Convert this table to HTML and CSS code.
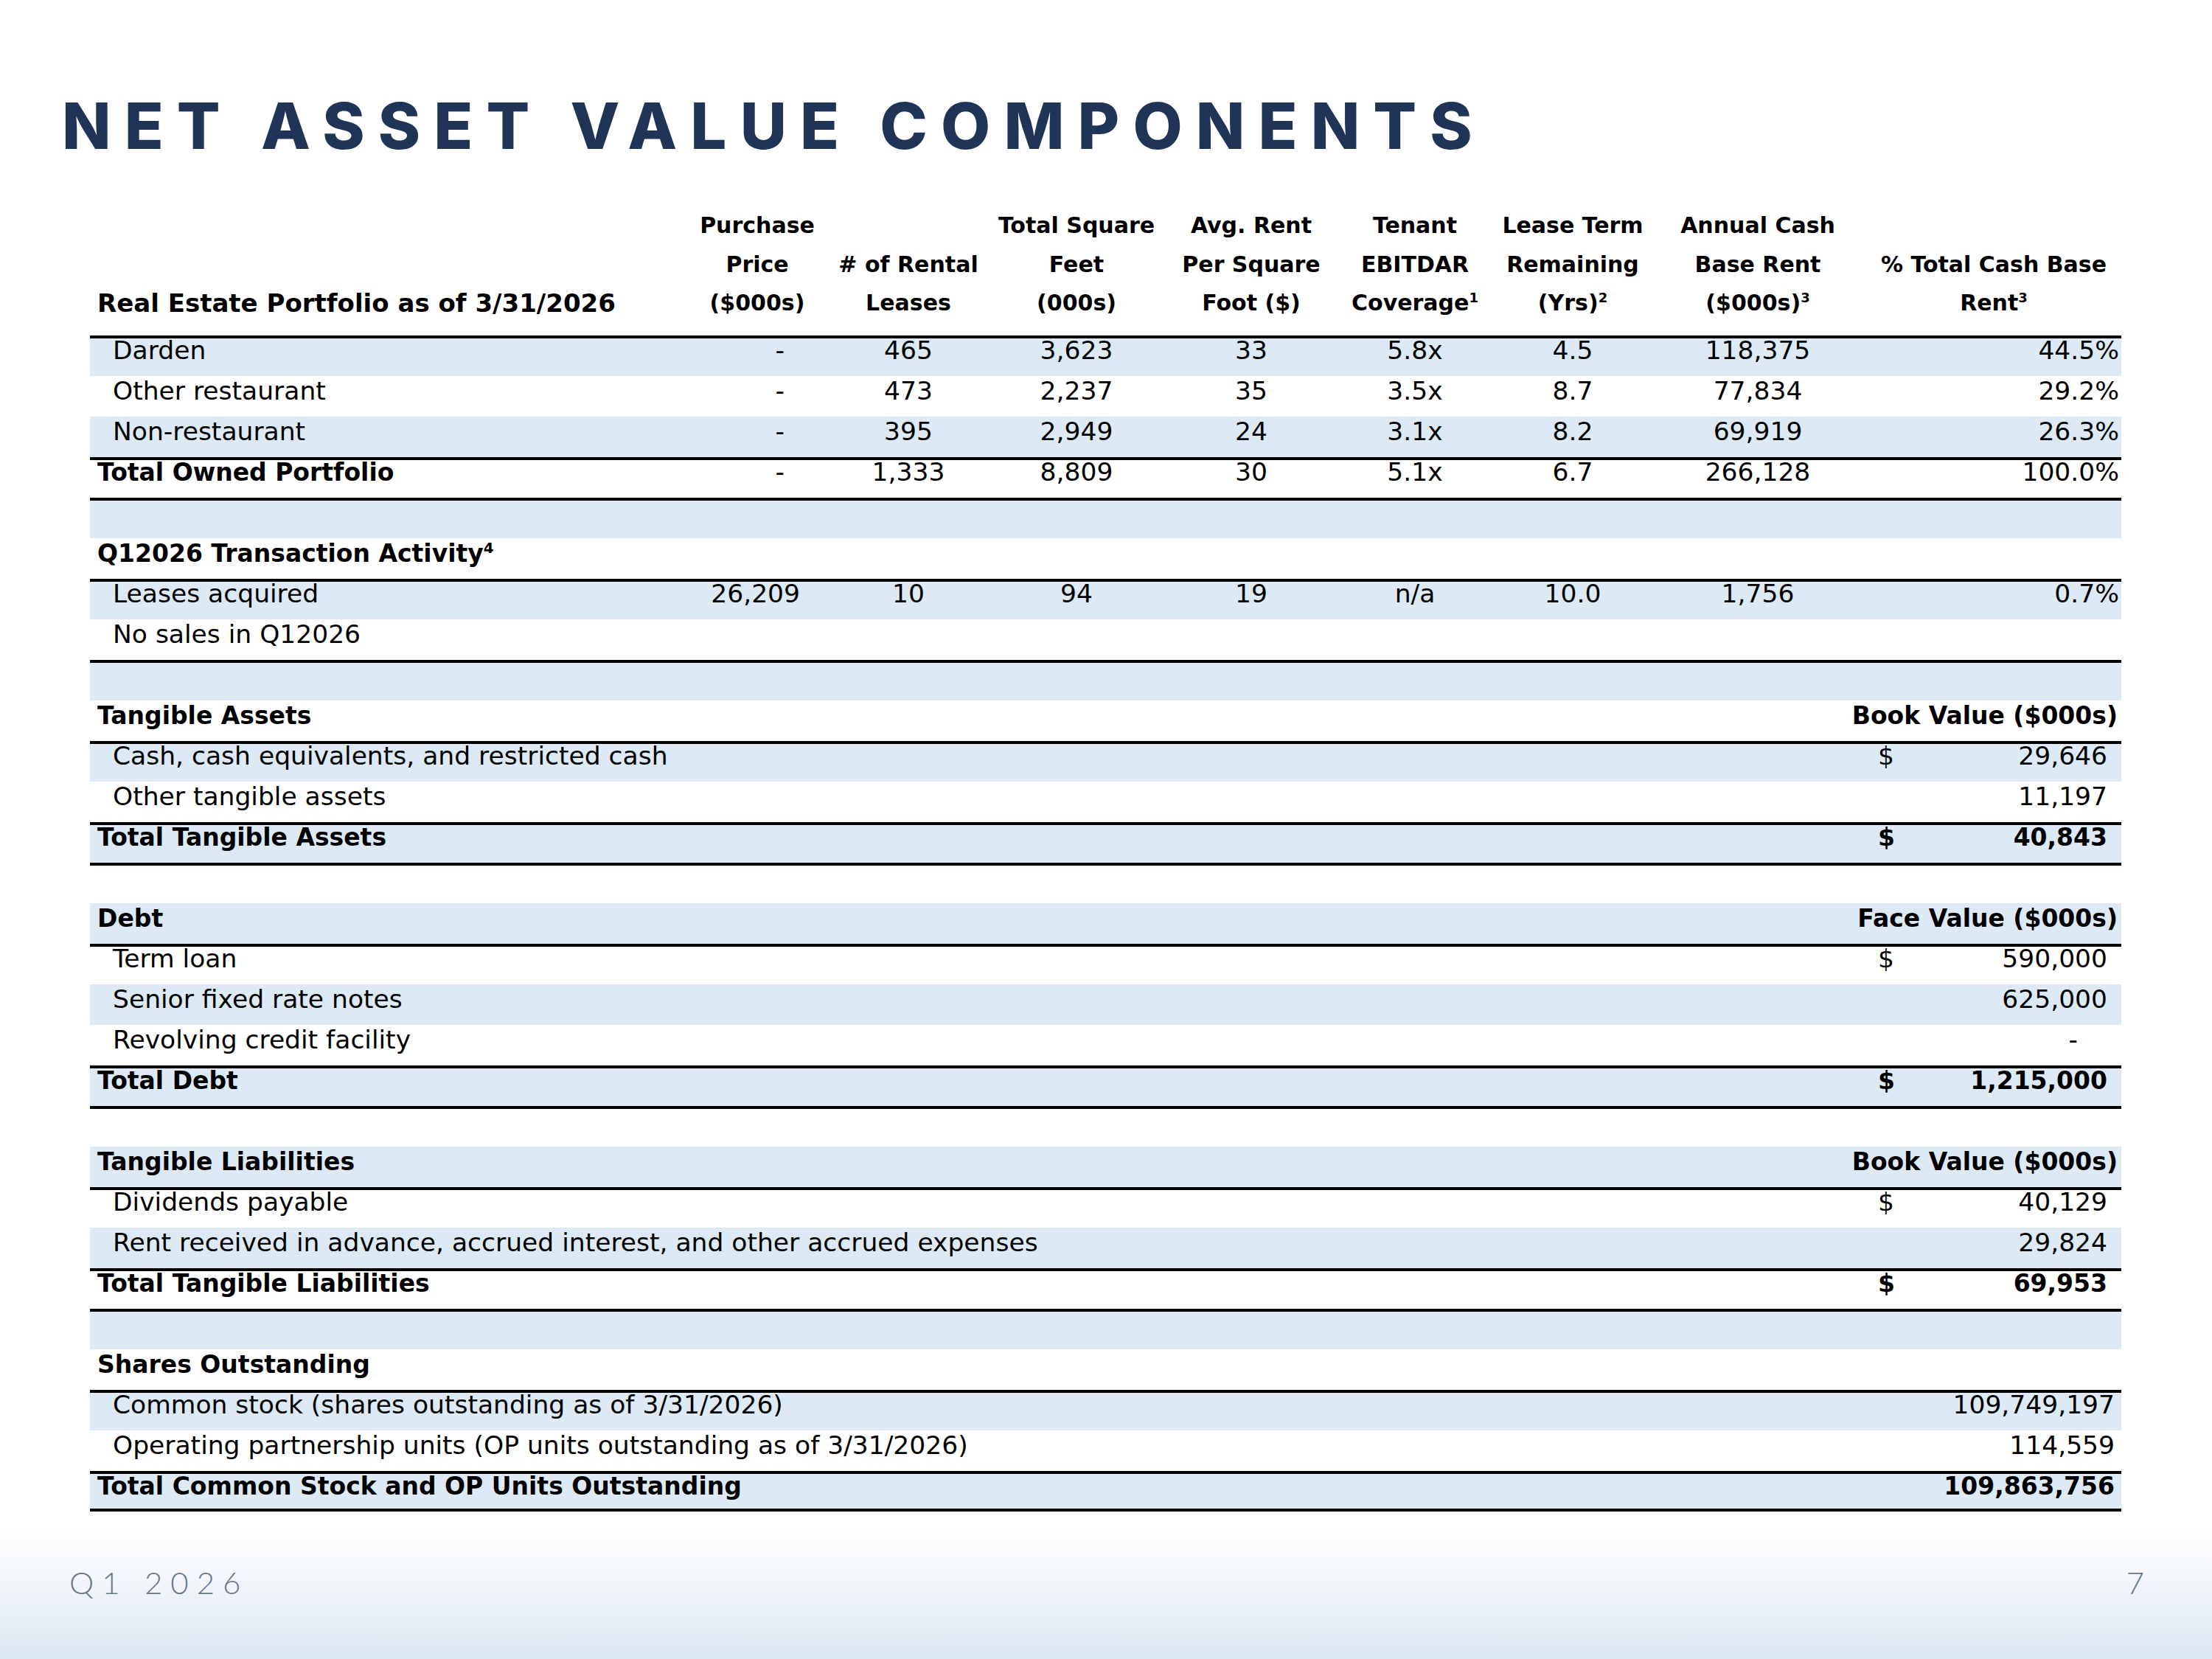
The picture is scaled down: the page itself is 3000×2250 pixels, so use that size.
FILE: index.html
```html
<!DOCTYPE html>
<html>
<head>
    <title>Net Asset Value Components</title>
    <link rel="stylesheet" href="styles.css">
</head>
<body>
<div class="page">
    <h1 class="title">NET ASSET VALUE COMPONENTS</h1>

    <div class="sheet">
        <div class="head">
            <div class="hc label">Real Estate Portfolio as of 3/31/2026</div>
            <div class="hc">Purchase<br>Price<br>($000s)</div>
            <div class="hc"># of Rental<br>Leases</div>
            <div class="hc">Total Square<br>Feet<br>(000s)</div>
            <div class="hc">Avg. Rent<br>Per Square<br>Foot ($)</div>
            <div class="hc">Tenant<br>EBITDAR<br>Coverage<sup>1</sup></div>
            <div class="hc">Lease Term<br>Remaining<br>(Yrs)<sup>2</sup></div>
            <div class="hc">Annual Cash<br>Base Rent<br>($000s)<sup>3</sup></div>
            <div class="hc">% Total Cash Base<br>Rent<sup>3</sup></div>
        </div>

        <!-- portfolio -->
        <div class="row rule">
            <div class="c sub">Darden</div>
            <div class="c price dash">-</div>
            <div class="c">465</div>
            <div class="c">3,623</div>
            <div class="c">33</div>
            <div class="c">5.8x</div>
            <div class="c">4.5</div>
            <div class="c">118,375</div>
            <div class="c pct">44.5%</div>
        </div>
        <div class="row">
            <div class="c sub">Other restaurant</div>
            <div class="c price dash">-</div>
            <div class="c">473</div>
            <div class="c">2,237</div>
            <div class="c">35</div>
            <div class="c">3.5x</div>
            <div class="c">8.7</div>
            <div class="c">77,834</div>
            <div class="c pct">29.2%</div>
        </div>
        <div class="row">
            <div class="c sub">Non-restaurant</div>
            <div class="c price dash">-</div>
            <div class="c">395</div>
            <div class="c">2,949</div>
            <div class="c">24</div>
            <div class="c">3.1x</div>
            <div class="c">8.2</div>
            <div class="c">69,919</div>
            <div class="c pct">26.3%</div>
        </div>
        <div class="row rule">
            <div class="c strong label">Total Owned Portfolio</div>
            <div class="c price dash">-</div>
            <div class="c">1,333</div>
            <div class="c">8,809</div>
            <div class="c">30</div>
            <div class="c">5.1x</div>
            <div class="c">6.7</div>
            <div class="c">266,128</div>
            <div class="c pct">100.0%</div>
        </div>

        <!-- transactions -->
        <div class="row rule"></div>
        <div class="row">
            <div class="c strong label wide">Q12026 Transaction Activity<sup>4</sup></div>
        </div>
        <div class="row rule">
            <div class="c sub">Leases acquired</div>
            <div class="c price">26,209</div>
            <div class="c">10</div>
            <div class="c">94</div>
            <div class="c">19</div>
            <div class="c">n/a</div>
            <div class="c">10.0</div>
            <div class="c">1,756</div>
            <div class="c pct">0.7%</div>
        </div>
        <div class="row">
            <div class="c sub wide">No sales in Q12026</div>
        </div>

        <!-- tangible assets -->
        <div class="row rule"></div>
        <div class="row">
            <div class="c strong label wide">Tangible Assets</div>
            <div class="c strong unit">Book Value ($000s)</div>
        </div>
        <div class="row rule">
            <div class="c sub wide">Cash, cash equivalents, and restricted cash</div>
            <div class="c money"><span>$</span><span>29,646</span></div>
        </div>
        <div class="row">
            <div class="c sub wide">Other tangible assets</div>
            <div class="c money"><span></span><span>11,197</span></div>
        </div>
        <div class="row rule">
            <div class="c strong label wide">Total Tangible Assets</div>
            <div class="c money strong"><span>$</span><span>40,843</span></div>
        </div>

        <!-- debt -->
        <div class="row rule"></div>
        <div class="row">
            <div class="c strong label wide">Debt</div>
            <div class="c strong unit">Face Value ($000s)</div>
        </div>
        <div class="row rule">
            <div class="c sub wide">Term loan</div>
            <div class="c money"><span>$</span><span>590,000</span></div>
        </div>
        <div class="row">
            <div class="c sub wide">Senior fixed rate notes</div>
            <div class="c money"><span></span><span>625,000</span></div>
        </div>
        <div class="row">
            <div class="c sub wide">Revolving credit facility</div>
            <div class="c money"><span></span><span class="nil">-</span></div>
        </div>
        <div class="row rule">
            <div class="c strong label wide">Total Debt</div>
            <div class="c money strong"><span>$</span><span>1,215,000</span></div>
        </div>

        <!-- tangible liabilities -->
        <div class="row rule"></div>
        <div class="row">
            <div class="c strong label wide">Tangible Liabilities</div>
            <div class="c strong unit">Book Value ($000s)</div>
        </div>
        <div class="row rule">
            <div class="c sub wide">Dividends payable</div>
            <div class="c money"><span>$</span><span>40,129</span></div>
        </div>
        <div class="row">
            <div class="c sub wide">Rent received in advance, accrued interest, and other accrued expenses</div>
            <div class="c money"><span></span><span>29,824</span></div>
        </div>
        <div class="row rule">
            <div class="c strong label wide">Total Tangible Liabilities</div>
            <div class="c money strong"><span>$</span><span>69,953</span></div>
        </div>

        <!-- shares -->
        <div class="row rule"></div>
        <div class="row">
            <div class="c strong label wide">Shares Outstanding</div>
        </div>
        <div class="row rule">
            <div class="c sub wide">Common stock (shares outstanding as of 3/31/2026)</div>
            <div class="c shares">109,749,197</div>
        </div>
        <div class="row">
            <div class="c sub wide">Operating partnership units (OP units outstanding as of 3/31/2026)</div>
            <div class="c shares">114,559</div>
        </div>
        <div class="row rule last">
            <div class="c strong label wide">Total Common Stock and OP Units Outstanding</div>
            <div class="c shares strong">109,863,756</div>
        </div>
    </div>

    <footer class="foot">
        <span class="quarter">Q1 2026</span>
        <span class="page-no">7</span>
    </footer>
</div>
</body>
</html>
```

FILE: styles.css
```css
body {
    margin: 0;
    background: #fff;
    color: #000;
    font-family: "DejaVu Sans", sans-serif;
}
.page {
    width: 3000px;
    height: 2250px;
    display: flex;
    flex-direction: column;
    overflow: hidden;
}
.title {
    margin: 127px 0 0 84px;
    font-family: Inter, sans-serif;
    font-weight: 800;
    font-size: 87px;
    line-height: 87px;
    letter-spacing: 18.1px;
    color: #1f3457;
}
.sheet {
    margin: 66px 0 0 122px;
    width: 2755px;
}
.head,
.row {
    display: grid;
    grid-template-columns: 803px 204px 206px 250px 224px 220px 208px 294px 346px;
}
.head {
    align-items: end;
    padding-bottom: 17px;
    font-weight: bold;
    font-size: 30px;
    line-height: 52.5px;
    text-align: center;
}
.hc.label {
    font-size: 34px;
    text-align: left;
    padding-left: 10px;
}
sup {
    font-size: 0.6em;
    line-height: 0;
}
.row {
    height: 55px;
    box-sizing: border-box;
    padding-top: 3px;
    font-size: 34.5px;
    line-height: 35px;
    white-space: nowrap;
}
.row:nth-child(even) {
    background: #dde9f5;
}
.row.rule {
    box-shadow: inset 0 4px 0 #000;
}
.row.last {
    box-shadow: inset 0 4px 0 #000, inset 0 -4px 0 #000;
}
.c {
    text-align: center;
}
.c.sub {
    text-align: left;
    padding-left: 31px;
}
.c.strong {
    font-weight: bold;
    font-size: 33px;
}
.c.label {
    text-align: left;
    padding-left: 10px;
}
.c.wide {
    grid-column: 1 / 8;
}
.c.price {
    text-align: right;
    padding-right: 44px;
}
.c.price.dash {
    padding-right: 65px;
}
.c.pct {
    text-align: right;
    padding-right: 3px;
}
.c.unit {
    grid-column: 8 / 10;
    text-align: right;
    padding-right: 5px;
}
.c.money {
    grid-column: 9;
    display: flex;
    justify-content: space-between;
    padding-left: 16px;
    padding-right: 19px;
}
.money .nil {
    padding-right: 40px;
}
.c.shares {
    grid-column: 8 / 10;
    text-align: right;
    padding-right: 9px;
}
.foot {
    margin-top: auto;
    height: 180px;
    box-sizing: border-box;
    padding: 55px 92px 0 94px;
    display: flex;
    justify-content: space-between;
    align-items: flex-start;
    background: linear-gradient(to bottom, #ffffff 0%, #f1f5fa 45%, #dbe7f2 100%);
    font-family: Lato, sans-serif;
    font-weight: 300;
    font-size: 42px;
    line-height: 42px;
    color: #6a7888;
}
.quarter {
    letter-spacing: 11px;
}
```
